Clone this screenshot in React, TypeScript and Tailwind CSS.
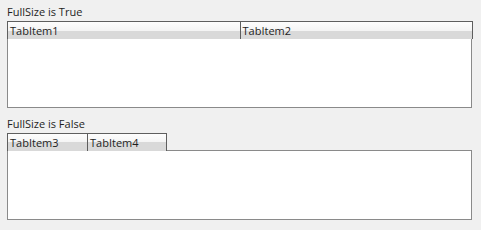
import React from 'react';

const font = { fontFamily: '"Open Sans", "Noto Sans", sans-serif' };

const Tabs = ({ items, full }: { items: string[]; full: boolean }) => (
  <div>
    <div className={`relative z-10 flex h-[18px] ${full ? 'w-[466px]' : ''}`}>
      {items.map((t, i) => (
        <div
          key={t}
          className={`h-[18px] border-t border-l border-[#5e5e5e] ${i === items.length - 1 ? 'border-r' : ''} ${full ? 'flex-1' : 'w-[80px]'} bg-[linear-gradient(to_bottom,#fdfdfd_0%,#f4f4f4_50%,#d9d9d9_50%,#d9d9d9_100%)] pl-[2px] text-[11px] leading-[17px] text-[#1e1e1e]`}
        >
          {t}
        </div>
      ))}
    </div>
    <div className="-mt-px h-[70px] w-[465px] border border-[#8a8a8a] bg-white" />
  </div>
);

export default function App() {
  return (
    <div className="h-[230px] w-[481px] overflow-hidden bg-[#f0f0f0] pl-[7px]" style={font}>
      <div className="h-[21px] pt-[4px] text-[11px] leading-[15px] text-[#1e1e1e]">FullSize is True</div>
      <Tabs items={['TabItem1', 'TabItem2']} full />
      <div className="h-[25px] pt-[8px] text-[11px] leading-[15px] text-[#1e1e1e]">FullSize is False</div>
      <Tabs items={['TabItem3', 'TabItem4']} full={false} />
    </div>
  );
}
